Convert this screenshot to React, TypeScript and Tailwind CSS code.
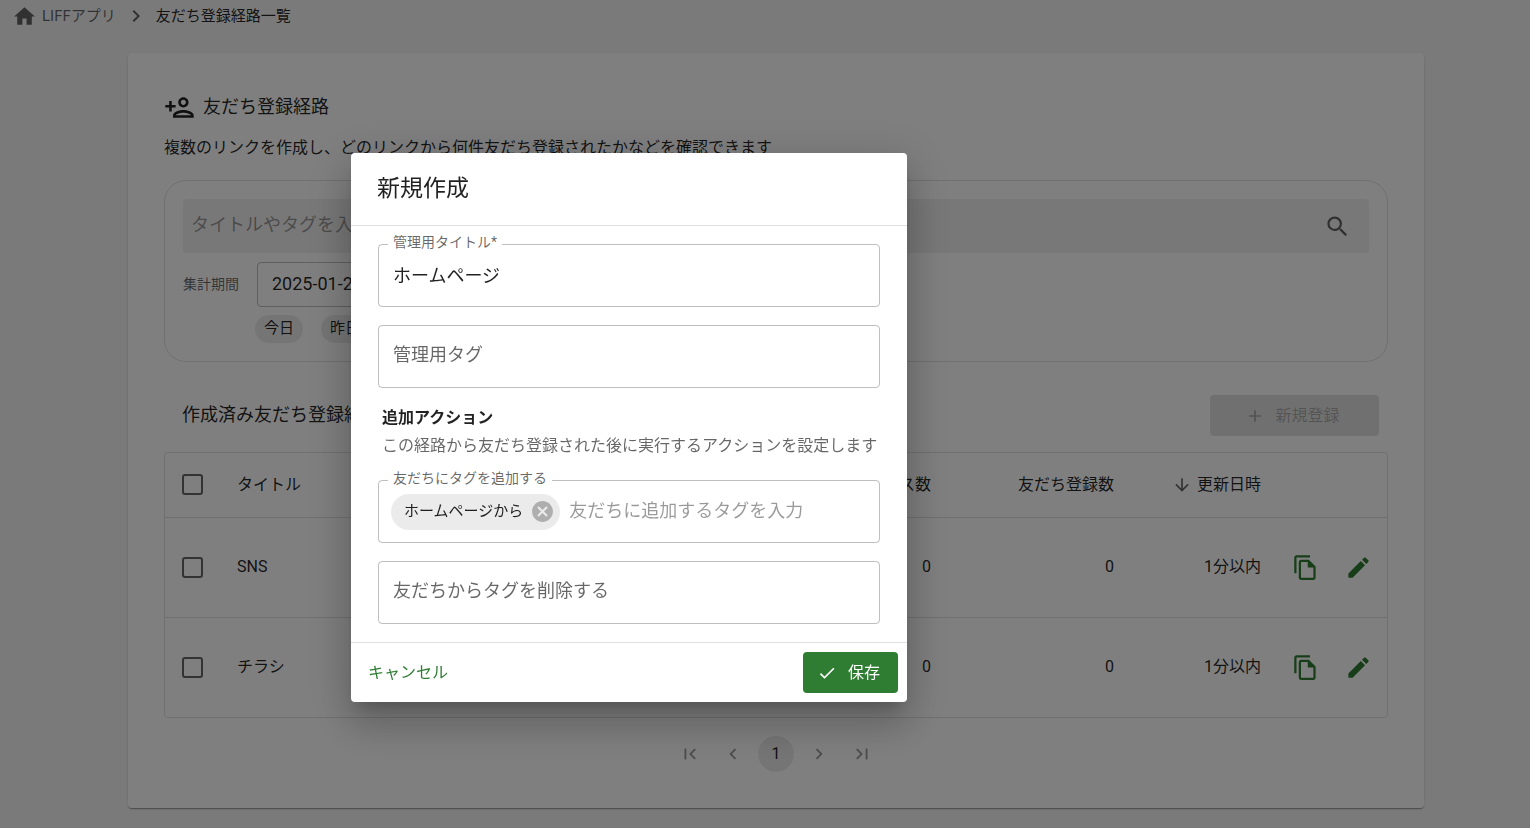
import { useState } from 'react';
import type { ReactNode } from 'react';
import {
  MdAdd,
  MdArrowDownward,
  MdCancel,
  MdCheck,
  MdEdit,
  MdFirstPage,
  MdHome,
  MdLastPage,
  MdNavigateBefore,
  MdNavigateNext,
  MdOutlineFileCopy,
  MdOutlinePersonAdd,
  MdSearch,
} from 'react-icons/md';

type Route = {
  id: number;
  title: string;
  accesses: number;
  friends: number;
  updated: string;
};

const routes: Route[] = [
  { id: 1, title: 'SNS', accesses: 0, friends: 0, updated: '1分以内' },
  { id: 2, title: 'チラシ', accesses: 0, friends: 0, updated: '1分以内' },
];

const periods = ['今日', '昨日'];

function Checkbox({ label }: { label: string }) {
  return (
    <input
      type="checkbox"
      aria-label={label}
      className="block size-[21px] appearance-none rounded-[3px] border-2 border-black/60 checked:bg-[#2e7d32]"
    />
  );
}

function Breadcrumbs() {
  return (
    <nav className="flex h-8 items-center pl-3 text-[15px] leading-6">
      <a href="#" className="flex items-center gap-[5px] text-black/60">
        <MdHome className="size-[25px]" />
        LIFFアプリ
      </a>
      <MdNavigateNext className="mx-2 size-6 text-black/60" />
      <span className="text-black/87">友だち登録経路一覧</span>
    </nav>
  );
}

function SearchPanel() {
  return (
    <div className="mt-5 rounded-[22px] border border-black/12 p-[18px]">
      <div className="flex h-[54px] items-center rounded bg-black/6 pr-[18px]">
        <input
          type="text"
          aria-label="検索"
          placeholder="タイトルやタグを入力"
          className="h-full min-w-0 flex-1 bg-transparent px-2 pb-1 text-lg outline-none placeholder:text-black/40"
        />
        <button type="button" aria-label="検索する" className="text-black/60">
          <MdSearch className="size-[27px]" />
        </button>
      </div>
      <div className="mt-[9px] flex items-center">
        <label htmlFor="period" className="w-[74px] pb-[2px] text-sm text-black/60">
          集計期間
        </label>
        <input
          id="period"
          type="text"
          defaultValue="2025-01-24"
          className="h-[45px] w-[160px] rounded border border-black/25 bg-transparent px-[14px] pb-[2px] text-lg"
        />
      </div>
      <div className="mt-2 ml-[72px] flex gap-[18px]">
        {periods.map((period) => (
          <button
            key={period}
            type="button"
            className="h-7 rounded-full bg-black/8 px-[9px] pb-[2px] text-[15px] leading-6"
          >
            {period}
          </button>
        ))}
      </div>
    </div>
  );
}

function RouteTable() {
  return (
    <div className="rounded border border-black/12">
      <table className="w-full table-fixed">
        <thead>
          <tr className="h-16 text-base">
            <th className="w-[54px] pl-[17px]">
              <Checkbox label="すべて選択" />
            </th>
            <th className="px-[18px] text-left font-normal">タイトル</th>
            <th className="w-[183px] px-[18px] text-right font-normal">アクセス数</th>
            <th className="w-[183px] px-[18px] text-right font-normal">友だち登録数</th>
            <th className="w-[147px] px-[18px] font-normal">
              <div className="flex items-center justify-end gap-[5px]">
                <MdArrowDownward className="size-5 text-black/60" />
                更新日時
              </div>
            </th>
            <th className="w-[108px]" aria-label="操作" />
          </tr>
        </thead>
        <tbody>
          {routes.map((route) => (
            <tr key={route.id} className="h-[100px] border-t border-black/12 text-base">
              <td className="pl-[17px]">
                <Checkbox label={route.title} />
              </td>
              <td className="px-[18px]">{route.title}</td>
              <td className="px-[18px] text-right">{route.accesses}</td>
              <td className="px-[18px] text-right">{route.friends}</td>
              <td className="px-[18px] text-right">{route.updated}</td>
              <td className="pr-[2px]">
                <div className="flex text-[#2e7d32]">
                  <button type="button" aria-label="コピー" className="flex flex-1 justify-center">
                    <MdOutlineFileCopy className="size-[27px]" />
                  </button>
                  <button type="button" aria-label="編集" className="flex flex-1 justify-center">
                    <MdEdit className="size-[27px]" />
                  </button>
                </div>
              </td>
            </tr>
          ))}
        </tbody>
      </table>
    </div>
  );
}

function Pagination() {
  const button = 'flex size-9 items-center justify-center rounded-full text-black/40';
  return (
    <nav aria-label="ページ送り" className="mt-[18px] flex justify-center gap-[7px]">
      <button type="button" aria-label="最初のページ" className={button}>
        <MdFirstPage className="size-[22px]" />
      </button>
      <button type="button" aria-label="前のページ" className={button}>
        <MdNavigateBefore className="size-[22px]" />
      </button>
      <button type="button" className="size-9 rounded-full bg-black/8 text-base">
        1
      </button>
      <button type="button" aria-label="次のページ" className={button}>
        <MdNavigateNext className="size-[22px]" />
      </button>
      <button type="button" aria-label="最後のページ" className={button}>
        <MdLastPage className="size-[22px]" />
      </button>
    </nav>
  );
}

type FieldProps = {
  id: string;
  label: string;
  value: string;
  onChange: (value: string) => void;
  placeholder?: string;
  children?: ReactNode;
};

// Outlined text field, the label moves onto the border once there is content
function Field({ id, label, value, onChange, placeholder, children }: FieldProps) {
  const floating = value !== '' || Boolean(children);
  return (
    <div className="relative flex h-[63px] items-center rounded border border-black/25 px-3">
      <label
        htmlFor={id}
        className={
          floating
            ? 'absolute -top-[13px] left-[9px] bg-white px-[5px] text-sm leading-5 text-black/60'
            : 'absolute top-[11px] left-[14px] text-lg leading-9 text-black/60'
        }
      >
        {label}
      </label>
      {children}
      <input
        id={id}
        type="text"
        value={value}
        onChange={(e) => onChange(e.target.value)}
        placeholder={placeholder}
        className="h-9 min-w-0 flex-1 bg-transparent pb-[3px] pl-[2px] text-lg outline-none placeholder:text-black/40"
      />
    </div>
  );
}

function CreateDialog({ onClose }: { onClose: () => void }) {
  const [form, setForm] = useState({ title: 'ホームページ', tag: '', addTag: '', removeTag: '' });
  const [tags, setTags] = useState(['ホームページから']);

  const update = (key: keyof typeof form) => (value: string) => setForm({ ...form, [key]: value });

  return (
    <div className="fixed inset-0 flex items-center justify-center bg-black/50 pt-[27px] pr-[272px]">
      <form
        role="dialog"
        aria-labelledby="dialog-title"
        onSubmit={(e) => {
          e.preventDefault();
          onClose();
        }}
        className="w-full max-w-[556px] rounded bg-white shadow-[0_11px_15px_-7px_rgba(0,0,0,0.2),0_24px_38px_3px_rgba(0,0,0,0.14),0_9px_46px_8px_rgba(0,0,0,0.12)]"
      >
        <h2 id="dialog-title" className="px-[26px] py-[18px] text-[23px] leading-9">
          新規作成
        </h2>
        <div className="flex flex-col gap-[18px] border-y border-black/12 px-[27px] py-[18px]">
          <Field id="title" label="管理用タイトル*" value={form.title} onChange={update('title')} />
          <Field id="tag" label="管理用タグ" value={form.tag} onChange={update('tag')} />
          <div className="px-1 pb-[2px] text-base leading-7">
            <h3 className="-mt-[2px] font-bold">追加アクション</h3>
            <p className="whitespace-nowrap text-black/60">
              この経路から友だち登録された後に実行するアクションを設定します
            </p>
          </div>
          <Field
            id="add-tag"
            label="友だちにタグを追加する"
            placeholder="友だちに追加するタグを入力"
            value={form.addTag}
            onChange={update('addTag')}
          >
            {tags.map((tag) => (
              <span
                key={tag}
                className="mr-[7px] flex h-9 items-center gap-[7px] rounded-full bg-black/8 pr-[5px] pl-[13px] text-[15px]"
              >
                {tag}
                <button
                  type="button"
                  aria-label={`${tag}を削除`}
                  onClick={() => setTags(tags.filter((t) => t !== tag))}
                  className="text-black/26"
                >
                  <MdCancel className="size-[25px]" />
                </button>
              </span>
            ))}
          </Field>
          <Field
            id="remove-tag"
            label="友だちからタグを削除する"
            value={form.removeTag}
            onChange={update('removeTag')}
          />
        </div>
        <div className="flex items-center justify-between p-[9px] text-base">
          <button type="button" onClick={onClose} className="h-[41px] px-2 text-[#2e7d32]">
            キャンセル
          </button>
          <button
            type="submit"
            className="flex h-[41px] items-center gap-[11px] rounded bg-[#2e7d32] pr-[18px] pl-[14px] text-white"
          >
            <MdCheck className="size-5" />
            保存
          </button>
        </div>
      </form>
    </div>
  );
}

export default function App() {
  const [open, setOpen] = useState(true);

  return (
    <div className="min-h-screen bg-[#f5f5f5] pb-5 font-['Roboto','Noto_Sans_CJK_JP',sans-serif] text-black/87">
      <Breadcrumbs />
      <div className="mt-[21px] pl-[22px]">
        <main className="mx-auto max-w-[1296px] rounded bg-white p-9 shadow-[0_2px_1px_-1px_rgba(0,0,0,0.2),0_1px_1px_rgba(0,0,0,0.14),0_1px_3px_rgba(0,0,0,0.12)]">
          <h1 className="flex items-center gap-2 text-lg leading-9">
            <MdOutlinePersonAdd className="size-[31px]" />
            友だち登録経路
          </h1>
          <p className="mt-[11px] text-base leading-6">
            複数のリンクを作成し、どのリンクから何件友だち登録されたかなどを確認できます
          </p>
          <SearchPanel />
          <div className="mt-[33px] mb-4 flex items-center justify-between pr-[9px] pl-[18px]">
            <h2 className="pb-[2px] text-lg">作成済み友だち登録経路</h2>
            <button
              type="button"
              disabled={open}
              onClick={() => setOpen(true)}
              className="flex h-[41px] w-[169px] items-center justify-center gap-[10px] rounded bg-[#2e7d32] pr-1 text-base text-white disabled:bg-black/12 disabled:text-black/26"
            >
              <MdAdd className="size-5" />
              新規登録
            </button>
          </div>
          <RouteTable />
          <Pagination />
        </main>
      </div>
      {open && <CreateDialog onClose={() => setOpen(false)} />}
    </div>
  );
}
